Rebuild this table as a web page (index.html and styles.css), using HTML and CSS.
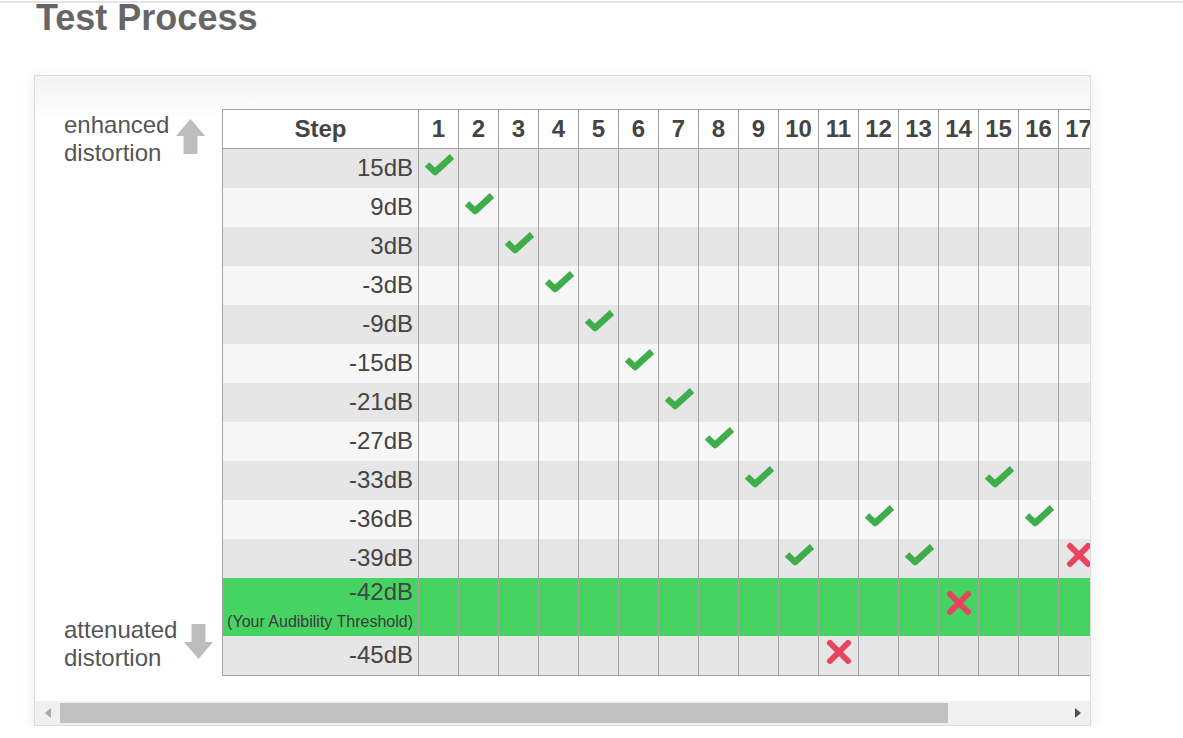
FILE: index.html
```html
<!DOCTYPE html>
<html lang="en">
<head>
<meta charset="utf-8">
<title>Test Process</title>
<link rel="stylesheet" href="styles.css">
</head>
<body>
<div class="rule"></div>
<div class="page">
  <h1 class="title">Test Process</h1>
  <div class="panel">
    <div class="viewport">
      <div class="scroller">
        <div class="axis">
          <div class="axis-label up">
            <span class="axis-text">enhanced<br>distortion</span>
            <svg class="axis-arrow" width="29" height="35" viewBox="0 0 29 35"><polygon points="14.5,0 29,17 21.5,17 21.5,35 7.5,35 7.5,17 0,17" fill="#bdbdbd"/></svg>
          </div>
          <div class="axis-label down">
            <span class="axis-text">attenuated<br>distortion</span>
            <svg class="axis-arrow" width="29" height="35" viewBox="0 0 29 35"><polygon points="7.5,0 21.5,0 21.5,18 29,18 14.5,35 0,18 7.5,18" fill="#bdbdbd"/></svg>
          </div>
        </div>
        <div class="grid" id="grid">
          <div class="row head">
            <div class="lbl">Step</div>
            <div>1</div><div>2</div><div>3</div><div>4</div><div>5</div><div>6</div><div>7</div><div>8</div><div>9</div><div>10</div><div>11</div><div>12</div><div>13</div><div>14</div><div>15</div><div>16</div><div>17</div>
          </div>
        </div>
      </div>
    </div>
    <div class="hscroll">
      <div class="sbtn"><span class="tri left"></span></div>
      <div class="track"><div class="thumb"></div></div>
      <div class="sbtn"><span class="tri right"></span></div>
    </div>
  </div>
</div>
<script src="app.js"></script>
</body>
</html>
```

FILE: app.js
```js
(function () {
  var rows = [
    ["15dB", {1: "c"}],
    ["9dB", {2: "c"}],
    ["3dB", {3: "c"}],
    ["-3dB", {4: "c"}],
    ["-9dB", {5: "c"}],
    ["-15dB", {6: "c"}],
    ["-21dB", {7: "c"}],
    ["-27dB", {8: "c"}],
    ["-33dB", {9: "c", 15: "c"}],
    ["-36dB", {12: "c", 16: "c"}],
    ["-39dB", {10: "c", 13: "c", 17: "x"}],
    ["-42dB", {14: "x"}, true],
    ["-45dB", {11: "x"}]
  ];
  var CHECK = '<svg class="mark check" width="32" height="24" viewBox="0 0 32 24"><path d="M4 12.5 L12 20 L29 4.5" fill="none" stroke="#40ad4b" stroke-width="6.5" stroke-linejoin="round"/></svg>';
  var CROSS = '<svg class="mark cross" width="28" height="28" viewBox="0 0 28 28"><path d="M5 5 L23 23 M23 5 L5 23" fill="none" stroke="#e8435f" stroke-width="6" stroke-linecap="round"/></svg>';
  var grid = document.getElementById("grid");
  rows.forEach(function (r, i) {
    var row = document.createElement("div");
    row.className = "row " + (r[2] ? "threshold" : (i % 2 === 0 ? "dark" : "light"));
    var html = r[2]
      ? '<div class="lbl"><span class="db">' + r[0] + '</span><span class="note">(Your Audibility Threshold)</span></div>'
      : '<div class="lbl">' + r[0] + '</div>';
    for (var c = 1; c <= 17; c++) {
      var m = r[1][c];
      html += "<div>" + (m === "c" ? CHECK : m === "x" ? CROSS : "") + "</div>";
    }
    row.innerHTML = html;
    grid.appendChild(row);
  });
})();
```

FILE: styles.css
```css
* { box-sizing: border-box; }

body {
  margin: 0;
  background: #fff;
  font-family: "Liberation Sans", Arial, sans-serif;
  color: #444;
}

.rule {
  margin-top: 1px;
  height: 2px;
  background: #e4e4e4;
}

.page {
  padding-left: 34px;
}

.title {
  margin: 0 0 0 2px;
  font-size: 36px;
  line-height: 30px;
  font-weight: bold;
  color: #666;
}

.panel {
  margin-top: 42px;
  width: 1057px;
  border: 1px solid #dcdcdc;
  background: linear-gradient(#f3f3f3, #fff 45px);
  box-shadow: 0 3px 14px rgba(0, 0, 0, 0.08);
}

.viewport {
  height: 625px;
  overflow: hidden;
  padding-top: 33px;
}

.scroller {
  display: flex;
  width: 1200px;
}

.axis {
  flex: none;
  width: 187px;
  padding: 2px 0 4px 29px;
  display: flex;
  flex-direction: column;
  justify-content: space-between;
}

.axis-label {
  display: flex;
  align-items: center;
  gap: 7px;
  font-size: 24px;
  line-height: 28px;
  color: #555;
}

.axis-arrow {
  flex: none;
  margin-bottom: 6px;
}

.grid {
  flex: none;
  border-top: 1px solid #a3a3a3;
  border-bottom: 1px solid #a3a3a3;
}

.row {
  display: grid;
  grid-template-columns: 196px repeat(17, 40px);
  height: 39px;
}

.row > div {
  border-left: 1px solid #a3a3a3;
  display: flex;
  align-items: center;
  justify-content: center;
}

.row .lbl {
  justify-content: flex-end;
  padding-right: 5px;
  padding-bottom: 1px;
  font-size: 24px;
  color: #444;
}

.head {
  background: #fff;
  border-bottom: 1px solid #a3a3a3;
  font-size: 24px;
  font-weight: bold;
  color: #444;
}

.head .lbl {
  justify-content: center;
  padding-right: 0;
  font-size: 24px;
}

.dark { background: #e6e6e6; }
.light { background: #f7f7f7; }

.threshold {
  height: 58px;
  background: #46d362;
}

.threshold .lbl {
  flex-direction: column;
  align-items: flex-end;
  justify-content: flex-start;
}

.threshold .db {
  line-height: 28px;
}

.threshold .note {
  margin-top: 6px;
  font-size: 16px;
  line-height: 20px;
  color: #3a3a3a;
}

.mark { flex: none; }
.check { margin-bottom: 10px; }
.cross { margin-bottom: 8px; }

.hscroll {
  height: 24px;
  background: #f0f0f0;
  display: flex;
  align-items: center;
}

.sbtn {
  flex: none;
  width: 25px;
  height: 24px;
  display: flex;
  align-items: center;
  justify-content: center;
}

.track {
  flex: 1;
  height: 24px;
  display: flex;
  align-items: center;
}

.thumb {
  width: 888px;
  height: 20px;
  background: #c1c1c1;
}

.tri {
  width: 0;
  height: 0;
  border-top: 5px solid transparent;
  border-bottom: 5px solid transparent;
}

.tri.left {
  border-right: 6px solid #a8a8a8;
}

.tri.right {
  border-left: 6px solid #505050;
}
```
